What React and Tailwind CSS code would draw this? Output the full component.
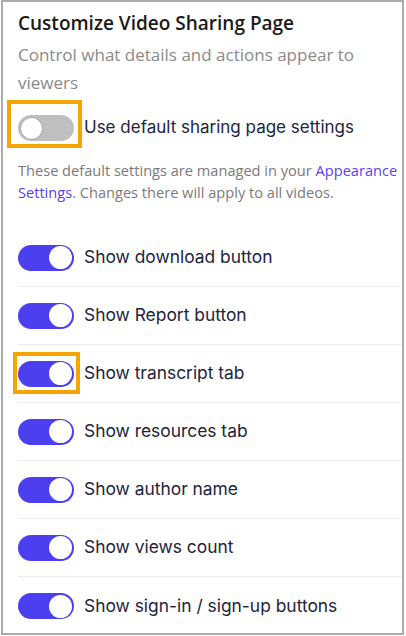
import React, { useState } from "react";

const ROWS = [
  { key: "download", label: "Show download button" },
  { key: "report", label: "Show Report button" },
  { key: "transcript", label: "Show transcript tab", highlight: true },
  { key: "resources", label: "Show resources tab" },
  { key: "author", label: "Show author name" },
  { key: "views", label: "Show views count" },
  { key: "signin", label: "Show sign-in / sign-up buttons" },
];

const LABEL_FONT = { fontFamily: "Inter, Lato, sans-serif" };

function Toggle({ on, onClick }) {
  return (
    <button
      onClick={onClick}
      className={`relative flex items-center shrink-0 w-[56px] h-[26px] rounded-full px-[2px] ${
        on ? "bg-[#4b3ff0] justify-end" : "bg-[#bfbfbf] justify-start"
      }`}
    >
      <span
        className={`block w-[23px] h-[23px] rounded-full bg-white ${
          on ? "" : "border border-[#a3a3a3]"
        }`}
      />
    </button>
  );
}

export default function App() {
  const [useDefault, setUseDefault] = useState(false);
  const [flags, setFlags] = useState(
    Object.fromEntries(ROWS.map((r) => [r.key, true]))
  );

  return (
    <div className="w-[406px] h-[636px] bg-white overflow-hidden">
      <div
        className="ml-px w-[403px] h-[635px] border-2 border-[#ababab] bg-white overflow-hidden"
        style={{ fontFamily: "'Open Sans', sans-serif" }}
      >
        <div className="pl-[15px] pt-[7px]">
          <h2 className="text-[19px] leading-[28px] font-semibold text-[#1a1a1a]">
            Customize Video Sharing Page
          </h2>
          <p className="mt-[4px] text-[17px] leading-[28px] text-[#8a8a8a] pr-6">
            Control what details and actions appear to viewers
          </p>

          <div className="mt-[7px] h-[48px] flex items-center">
            <div className="relative flex items-center">
              <span className="absolute left-[-11px] top-[-15px] w-[75px] h-[48px] border-4 border-[#f6a400]" />
              <Toggle on={useDefault} onClick={() => setUseDefault(!useDefault)} />
            </div>
            <span className="ml-[10px] text-[17px] text-[#22243d]" style={LABEL_FONT}>
              Use default sharing page settings
            </span>
          </div>

          <p className="mt-[7px] text-[14.6px] leading-[22px] text-[#7a7a7a]">
            These default settings are managed in your{" "}
            <span className="text-[#5b3fe8]">Appearance Settings</span>. Changes there will apply to all videos.
          </p>
        </div>

        <div className="mt-[26px] ml-[15px] mr-[1px]">
          {ROWS.map((r, i) => (
            <div
              key={r.key}
              className={`h-[58px] flex items-center ${
                i < ROWS.length - 1 ? "border-b border-[#ececec]" : ""
              }`}
            >
              <div className="relative flex items-center">
                {r.highlight && (
                  <span className="absolute left-[-5px] top-[-9px] w-[67px] h-[42px] border-4 border-[#f6a400]" />
                )}
                <Toggle
                  on={flags[r.key]}
                  onClick={() => setFlags({ ...flags, [r.key]: !flags[r.key] })}
                />
              </div>
              <span className="ml-[10px] text-[17.4px] text-[#22243d]" style={LABEL_FONT}>
                {r.label}
              </span>
            </div>
          ))}
        </div>
      </div>
    </div>
  );
}
